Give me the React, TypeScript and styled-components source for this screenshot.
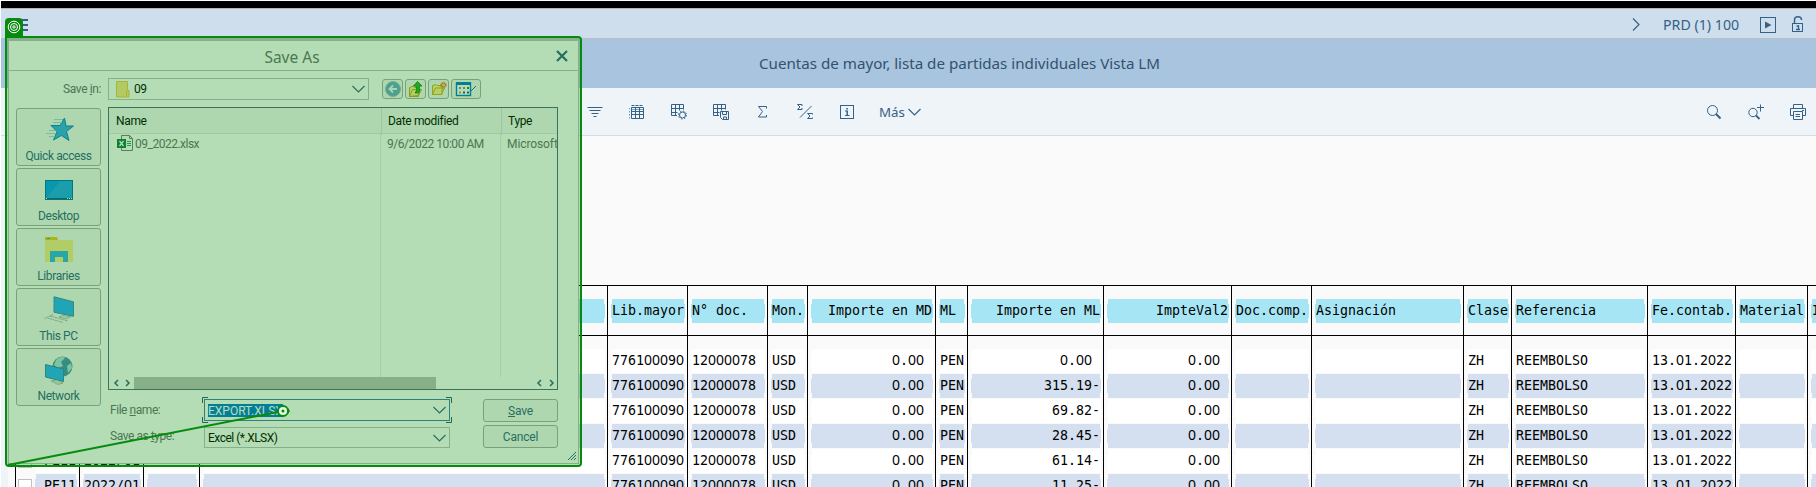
import React from "react";
import styled, { createGlobalStyle, css } from "styled-components";

const ink = "#346187";
const line = "#bfbfbf";
const uiFont = `Roboto, "Liberation Sans", sans-serif`;
const titleFont = `"Noto Sans", "Open Sans", sans-serif`;
const monoFont = `"DejaVu Sans Mono", "Liberation Mono", monospace`;

const GlobalStyle = createGlobalStyle`
  *, *::before, *::after { box-sizing: border-box; }
  body { margin: 0; background: #fff; font-family: ${uiFont}; }
`;

const Page = styled.div`
  position: relative;
  display: flex;
  flex-direction: column;
  width: 1816px;
  height: 487px;
  padding: 1px 0 0 1px;
  overflow: hidden;
  background: #fff;
`;

const TopEdge = styled.div`
  flex: none;
  height: 8px;
  background: #000;
  border-bottom: 1px solid #b9b7b4;
`;

const ShellBar = styled.header`
  flex: none;
  display: flex;
  align-items: center;
  justify-content: space-between;
  height: 30px;
  padding: 2px 12px 0 15px;
  background: #cfdeed;
  border-bottom: 1px solid #b9bfc6;
`;

const ShellRight = styled.div`
  display: flex;
  align-items: center;
`;

const SystemName = styled.span`
  width: 78px;
  margin: 0 19px 0 23px;
  font: 14.2px/20px ${titleFont};
  color: ${ink};
  white-space: nowrap;
`;

const LockIcon = styled.svg`
  margin-left: 16px;
`;

const TitleBar = styled.div`
  flex: none;
  height: 49px;
  padding: 0 0 0 102px;
  background: #a9c4de;
  color: #32526f;
  text-align: center;
  font: 15.15px/49px ${titleFont};
`;

const Toolbar = styled.div`
  flex: none;
  display: flex;
  align-items: center;
  height: 48px;
  padding-left: 576px;
  background: #eff4f8;
  border-bottom: 1px solid #cfdeeb;
`;

const ToolGroup = styled.div<{ $end?: boolean }>`
  display: flex;
  align-items: center;
  gap: 6px;
  margin-left: ${(p) => (p.$end ? "auto" : 0)};
`;

const ToolButton = styled.span`
  display: flex;
  justify-content: center;
  width: 36px;
`;

const MoreButton = styled.span`
  display: flex;
  align-items: center;
  gap: 3px;
  margin-left: 14px;
  color: ${ink};
  font: 13.3px/20px ${titleFont};
`;

const Content = styled.main`
  flex: none;
  width: 100%;
  height: 351px;
  padding: 149px 0 0 7px;
  background: linear-gradient(90deg, #eff4f8 7px, #fafafa 7px);
`;

const Columns = styled.div`
  display: flex;
  padding-left: 7px;
`;

const Column = styled.div<{ $width: number }>`
  flex: none;
  width: ${(p) => p.$width}px;
  height: 220px;
  border-left: 1px solid #000;
`;

const HeadBlock = styled.div`
  height: 51px;
  padding: 13px 2px 0 3px;
  margin-bottom: 13px;
  border: solid #000;
  border-width: 1px 0;
`;

const CellRow = styled.div`
  display: flex;
  height: 25px;
  padding: 0 2px 0 3px;
`;

const Cell = styled.div<{ $fill: string; $right?: boolean }>`
  flex: 1;
  height: 24px;
  padding: 0 1px;
  background:
    linear-gradient(${(p) => p.$fill}, ${(p) => p.$fill}) center / calc(100% - 2px) 100% no-repeat,
    linear-gradient(${(p) => p.$fill}, ${(p) => p.$fill}) center / 100% 14px no-repeat;
  color: #000;
  font: 13.29px/24px ${monoFont};
  text-align: ${(p) => (p.$right ? "right" : "left")};
  white-space: pre;
`;

const OpenZero = styled.span`
  font: 14px/1 ${titleFont};
`;

const Checkbox = styled.span`
  width: 14px;
  height: 14px;
  margin: 5px 3px 0 -1px;
  background: #fff;
  border: 1px solid #bfbfbf;
`;

/* Save dialog */

const Dialog = styled.section`
  position: absolute;
  left: 8px;
  top: 39px;
  width: 571px;
  height: 425px;
  background: #fff;
  border: 1px solid ${line};
  border-top-width: 2px;
  font-size: 12px;
  line-height: 14px;
  color: #6a6d70;
`;

const DialogTitle = styled.div`
  position: relative;
  height: 30px;
  padding-right: 3px;
  border-bottom: 1px solid ${line};
  text-align: center;
  font: 15.5px/32px ${titleFont};
  color: #6a6d70;
`;

const CloseIcon = styled.svg`
  position: absolute;
  right: 10px;
  top: 9px;
`;

const LookInRow = styled.div`
  display: flex;
  align-items: center;
  height: 22px;
  margin: 7px 0 7px 7px;
`;

const LookInLabel = styled.label`
  width: 85px;
  margin-right: 7px;
  text-align: right;
  letter-spacing: -0.4px;
`;

const Combo = styled.div<{ $w: number; $h: number; $focus?: boolean }>`
  position: relative;
  display: flex;
  align-items: center;
  width: ${(p) => p.$w}px;
  height: ${(p) => p.$h}px;
  padding: 0 3px 0 3px;
  background: #fff;
  border: 1px solid ${(p) => (p.$focus ? "#427cac" : line)};
  color: #000;
  letter-spacing: -0.5px;
  svg.arrow { margin-left: auto; }
`;

const ComboFolder = styled.svg`
  margin: 0 4px 0 4px;
`;

const FocusCorners = styled.svg`
  position: absolute;
  left: -3px;
  top: -3px;
`;

const Selected = styled.span`
  height: 13px;
  width: 75px;
  background: #0078d7;
  color: #fff;
  line-height: 14px;
  letter-spacing: 0;
  white-space: nowrap;
`;

const NavButtons = styled.div`
  display: flex;
  gap: 2px;
  margin-left: 13px;
`;

const NavButton = styled.span<{ $wide?: boolean }>`
  display: flex;
  align-items: center;
  justify-content: center;
  width: ${(p) => (p.$wide ? 30 : 21)}px;
  height: 20px;
  background: #f7f7f7;
  border: 1px solid #ababab;
  border-radius: 3px;
`;

const DialogMain = styled.div`
  display: flex;
  gap: 7px;
  padding-left: 7px;
`;

const Places = styled.nav`
  display: flex;
  flex-direction: column;
  gap: 2px;
  padding-top: 1px;
`;

const Place = styled.div`
  display: flex;
  flex-direction: column;
  align-items: center;
  justify-content: space-between;
  width: 85px;
  height: 58px;
  padding: 7px 0 2px;
  background: #f7f7f7;
  border: 1px solid #a9a9a9;
  border-radius: 3px;
  color: ${ink};
  letter-spacing: -0.4px;
`;

const FileList = styled.div`
  display: flex;
  flex-direction: column;
  width: 450px;
  height: 283px;
  border: 1px solid #4f6a78;
  overflow: hidden;
`;

const listGrid = css`
  display: grid;
  grid-template-columns: 272px 120px 57px;
`;

const ListHead = styled.div`
  ${listGrid}
  flex: none;
  height: 26px;
  background: #f7f7f7;
  border-bottom: 1px solid #e5e5e5;
  color: #000;
  line-height: 27px;
  letter-spacing: -0.35px;
  span { padding-left: 6px; }
  span:first-child { padding-left: 7px; }
  span + span { border-left: 1px solid #dedede; }
`;

const ListBody = styled.div`
  ${listGrid}
  flex: 1;
  line-height: 20px;
`;

const ListColumn = styled.div<{ $divided?: boolean; $spacing?: number }>`
  display: flex;
  margin-left: ${(p) => (p.$divided ? -1 : 0)}px;
  padding-left: ${(p) => (p.$divided ? 6 : 8)}px;
  border-left: ${(p) => (p.$divided ? "1px solid #e3efef" : "0")};
  letter-spacing: ${(p) => p.$spacing ?? 0}px;
  white-space: nowrap;
  svg { margin: 1px 2px 0 0; }
`;

const ScrollTrack = styled.div`
  flex: none;
  display: flex;
  align-items: center;
  height: 12px;
  padding-right: 1px;
`;

const ScrollThumb = styled.div`
  width: 302px;
  height: 12px;
  margin-right: auto;
  background: ${line};
`;

const Form = styled.div`
  display: flex;
  flex-direction: column;
  gap: 3px;
  margin-top: 9px;
`;

const FormRow = styled.div<{ $low?: boolean }>`
  display: flex;
  height: 23px;
  align-items: ${(p) => (p.$low ? "flex-end" : "flex-start")};
`;

const FieldLabel = styled.label`
  width: 96px;
  padding-left: 2px;
  line-height: 23px;
  letter-spacing: -0.45px;
`;

const PushButton = styled.button`
  width: 75px;
  height: 23px;
  margin: 0 0 0 33px;
  padding: 0;
  background: #f7f7f7;
  border: 1px solid #a9a9a9;
  border-radius: 3px;
  color: ${ink};
  font: 12px/20px ${uiFont};
  letter-spacing: -0.2px;
`;

const ResizeGrip = styled.svg`
  position: absolute;
  right: 2px;
  bottom: 3px;
`;

/* Recorder highlight drawn over the dialog */

const Highlight = styled.div`
  position: absolute;
  left: 5px;
  top: 36px;
  width: 577px;
  height: 431px;
  background: rgba(7, 141, 9, 0.3);
  background-clip: padding-box;
  border: 2px solid #078b0d;
  border-radius: 0 4px 4px 4px;
`;

const HighlightBadge = styled.div`
  position: absolute;
  left: 5px;
  top: 18px;
  display: flex;
  align-items: center;
  justify-content: center;
  width: 18px;
  height: 18px;
  background: #078b0d;
  border-radius: 4px 4px 0 0;
`;

const Pointer = styled.svg`
  position: absolute;
  left: 0;
  top: 400px;
`;

const Stroke = ({ w = 16, h = 16, d, sw = 1, c = ink, cls }: { w?: number; h?: number; d: string; sw?: number; c?: string; cls?: string }) => (
  <svg className={cls} width={w} height={h} viewBox={`0 0 ${w} ${h}`} fill="none" stroke={c} strokeWidth={sw}>
    <path d={d} />
  </svg>
);

const Chevron = () => <Stroke cls="arrow" w={13} h={8} sw={1.15} d="M.5 1 6.5 7 12.5 1" />;

const icons = {
  filter: <Stroke d="M.5 3.5h15M2.5 6.5h11M4.5 9.5h7M6.5 12.5h3" />,
  table: (
    <svg width="16" height="16" fill="none" stroke={ink}>
      <path d="M2.500 3.500h12v11h-12zM2.500 7.500h12M2.500 10.500h12M6.500 3.500v11M10.500 3.500v11" />
      <path d="M2.500 1.500h12" strokeDasharray="3 1" />
      <path d="M2.500 5.500h12" strokeWidth=".6" />
      <path d="M.500 4v11" strokeDasharray="1.500 1.500" stroke="#6aa5d8" />
    </svg>
  ),
  tableSettings: (
    <svg width="16" height="16" fill="none" stroke={ink}>
      <path d="M6 11.500H.500V.500h12v5M.500 4.500h12M.500 8.500h6M4.500.500v11M8.500.500v6" />
      <circle cx="11.500" cy="11" r="3" />
      <circle cx="11.500" cy="11" r="4" strokeDasharray="1.500 1.640" />
    </svg>
  ),
  tableSave: (
    <svg width="16" height="16" fill="none" stroke={ink}>
      <path d="M6 11.500H.500V.500h12v5M.500 4.500h12M.500 8.500h6M4.500.500v11M8.500.500v6" />
      <path d="M7.500 7.500h8v8h-6l-2-2zM9.500 7.500v3h4v-3M10.500 15.500v-2.500h3v2.500" />
    </svg>
  ),
  sum: <Stroke w={10} h={12} d="M8.500 2.500v-2h-8l4 5-4 5.500h8v-2" />,
  subtotal: <Stroke d="M5 2V.500H.500l2.500 2.500-2.500 2.500H5V4M14.500 2 3 13.500M15.500 10.500V9.500H10.500l2.500 2.500-2.500 2.500h5V13.500" />,
  info: (
    <svg width="14" height="14" fill="none" stroke={ink}>
      <rect x=".5" y=".5" width="13" height="13" />
      <path d="M5 6h2M5 10.500h4.500" />
      <path d="M6.300 3h1.600v1.500H6.300z" fill={ink} stroke="none" />
      <path d="M7.200 5.500v5" strokeWidth="1.500" />
    </svg>
  ),
  search: (
    <svg width="16" height="16" fill="none" stroke={ink}>
      <circle cx="6.500" cy="6.500" r="5" />
      <path d="m10 10 4.500 4.500" strokeWidth="2" />
    </svg>
  ),
  searchMore: (
    <svg width="16" height="16" fill="none" stroke={ink}>
      <circle cx="5" cy="8.500" r="4.200" />
      <path d="m8 11.500 3.500 3.500" strokeWidth="1.800" />
      <path d="M12.500.500v7M9 3.500h7" />
    </svg>
  ),
  print: (
    <svg width="16" height="16" fill="none" stroke={ink}>
      <path d="M3.500 4.500v-4h9v4M3.500 11.500H.500v-7h15v7h-3M12 6.500h2" />
      <path d="M3.500 7.500h9v8h-9zM5.500 10.500h4.500M5.500 12.500h4.500" />
    </svg>
  ),
};

const ExcelIcon = () => (
  <svg width="16" height="17" fill="none">
    <path d="M4.500.500h8l3 3v12h-11z" fill="#fff" stroke="#7a7a7a" />
    <path d="M12.500.500v3h3" stroke="#7a7a7a" />
    <path d="M10 6.500h4M10 8.500h4M10 10.500h4" stroke="#21a366" />
    <rect y="4" width="9" height="9" fill="#107c41" />
    <path d="m2.500 6 4 5M6.500 6l-4 5" stroke="#fff" strokeWidth="1.300" />
  </svg>
);

const Monitor = ({ d, edge }: { d: string; edge: string }) => (
  <path d={d} fill="#2aafff" stroke={edge} />
);

const placeIcons: Record<string, React.ReactNode> = {
  "Quick access": (
    <svg width="30" height="26" fill="none">
      <path d="m20.500 2 1.500 8h7.500l-7 5.500 2.500 9-7.500-5-8 4.500 3.500-8.500L7 9.500h9z" fill="#3aabee" stroke="#0f7fc4" />
      <path d="M10 3.500h9M9 6.500h9M2 17.500h9M5 20.500h6M5 14.500h6" stroke="#a9cfe4" />
    </svg>
  ),
  Desktop: (
    <svg width="28" height="28">
      <rect x=".5" y="4.500" width="27" height="19" fill="#0a9bf5" stroke="#0070a8" />
      <path d="M1 23 15 5h12v18z" fill="#3fb0f0" opacity=".5" />
      <path d="M1 22.500h26" stroke="#005a90" />
      <path d="M1 22.500h1M22 22.500h1M24 22.500h1M26 22.500h1" stroke="#fff" />
    </svg>
  ),
  Libraries: (
    <svg width="28" height="28">
      <path d="M0 2h12v2h16v22H0z" fill="#fee88f" />
      <path d="M0 1h12l1 3H0z" fill="#f3c41f" />
      <path d="M2 2h3v1H2z" fill="#20a5f0" />
      <path d="M5 15h18v11h-5v-5h-8v5H5z" fill="#37b2ec" />
    </svg>
  ),
  "This PC": (
    <svg width="32" height="28">
      <Monitor d="m11 .800 19.500 5v14.500l-19.500-4z" edge="#4d88a8" />
      <path d="m16 21 4-1.500 8 1-5 2.500z" fill="#e3e8ea" stroke="#8a9a9f" strokeWidth=".6" />
      <path d="M7 20 25 25M4.500 22 20 26.500M10 18.500 1.500 22.500" stroke="#a3aeb2" strokeDasharray="2 .6" />
    </svg>
  ),
  Network: (
    <svg width="30" height="29">
      <circle cx="18.500" cy="10.500" r="10" fill="#4b8fb8" />
      <path d="M12 4c4-4 8-3 9-2l-4 4 2 4-5 2-4-3zM23 10l4-3 1 5-4 5z" fill="#b4dbe2" />
      <Monitor d="m1.500 8.500 18 4.500v12.500l-18-4.500z" edge="#4580a5" />
      <path d="m7 25 6-1 6 3-5 1.500z" fill="#d8e0e2" stroke="#8a9a9f" strokeWidth=".6" />
    </svg>
  ),
};

const W = "#ffffff";
const B = "#d4dfef";
const H = "#a6e6f4";

type Col = { width: number; head: string; rows: string[]; right?: boolean; check?: boolean };
const six = (s: string) => Array(6).fill(s) as string[];

const columns: Col[] = [
  { width: 64, head: "", rows: six("PE11"), check: true },
  { width: 64, head: "", rows: six("2022/01") },
  { width: 56, head: "", rows: six("") },
  { width: 408, head: "", rows: six("") },
  { width: 80, head: "Lib.mayor", rows: six("776100090") },
  { width: 80, head: "N° doc.", rows: six("12000078") },
  { width: 40, head: "Mon.", rows: six("USD") },
  { width: 128, head: "Importe en MD", rows: six("0.00 "), right: true },
  { width: 32, head: "ML", rows: six("PEN") },
  { width: 136, head: "Importe en ML", rows: ["0.00 ", "315.19-", "69.82-", "28.45-", "61.14-", "11.25-"], right: true },
  { width: 128, head: "ImpteVal2", rows: six("0.00 "), right: true },
  { width: 80, head: "Doc.comp.", rows: six("") },
  { width: 152, head: "Asignación", rows: six("") },
  { width: 48, head: "Clase", rows: six("ZH") },
  { width: 136, head: "Referencia", rows: six("REEMBOLSO") },
  { width: 88, head: "Fe.contab.", rows: six("13.01.2022") },
  { width: 72, head: "Material", rows: six("") },
  { width: 80, head: "I", rows: six("") },
];

/* Zeros are set in the sans face so that they have no inner dot. */
const Figures = ({ text }: { text: string }) => (
  <>
    {text.split(/(0+)/).map((part, i) => (part.startsWith("0") ? <OpenZero key={i}>{part}</OpenZero> : part))}
  </>
);

const GridColumn = ({ col }: { col: Col }) => (
  <Column $width={col.width}>
    <HeadBlock>
      <Cell $fill={H} $right={col.right}>{col.head}</Cell>
    </HeadBlock>
    {col.rows.map((text, i) => (
      <CellRow key={i}>
        {col.check && <Checkbox />}
        <Cell $fill={i % 2 ? B : W} $right={col.right || col.check}>
          <Figures text={text} />
        </Cell>
      </CellRow>
    ))}
  </Column>
);

const SaveDialog = () => (
  <Dialog>
    <DialogTitle>
      Save As
      <CloseIcon width="12" height="12" stroke={ink} strokeWidth="2.200">
        <path d="m1 1 10 10M11 1 1 11" />
      </CloseIcon>
    </DialogTitle>
    <LookInRow>
      <LookInLabel>Save <u>i</u>n:</LookInLabel>
      <Combo $w={261} $h={22}>
        <ComboFolder width="14" height="17">
          <path d="M.500.500h11v9h1.500v6.500H.500z" fill="#fee28b" stroke="#efc540" />
          <path d="M10.500 15.500v-6" stroke="#efc540" />
        </ComboFolder>
        09
        <Chevron />
      </Combo>
      <NavButtons>
        <NavButton>
          <svg width="16" height="16">
            <circle cx="8" cy="8" r="7.500" fill="#6ba8cc" stroke="#a5bccb" />
            <path d="M12 8H4.500M8 4.500 4.500 8 8 11.500" fill="none" stroke="#eef5fa" strokeWidth="1.800" />
          </svg>
        </NavButton>
        <NavButton>
          <svg width="16" height="17">
            <path d="M1.500 15.500v-9l4-1.500 1 1.500h5l-1 9zM1.500 15.500l3-7h9l-3 6z" fill="#fff08c" stroke="#c9a227" />
            <path d="M10.500 12c1.500-2 1.500-4 .500-7H14L9.500.500 5.500 5h2.500c1 3 .500 5-1 7z" fill="#2cb52c" stroke="#0b7d12" strokeWidth=".8" />
          </svg>
        </NavButton>
        <NavButton>
          <svg width="16" height="16">
            <path d="M1.500 13.500v-9l3.500-1 1 1h5v9zM1.500 13.500l3-6.500h9l-3 6.500z" fill="#fff08c" stroke="#d2aa2c" />
            <circle cx="12.500" cy="4" r="2" fill="#ffd36a" stroke="#f0632a" />
            <circle cx="12.500" cy="4" r="3" fill="none" stroke="#f0632a" strokeDasharray="1 1.360" />
          </svg>
        </NavButton>
        <NavButton $wide>
          <svg width="26" height="16">
            <rect x="3.500" y="2" width="14" height="12.500" fill="#fff" stroke="#0078d7" strokeWidth="1.400" />
            <path d="M3 2.500h15" stroke="#0078d7" strokeWidth="3" />
            <path d="M6 7h2M10 7h2" stroke="#a08c80" strokeWidth="2" />
            <path d="M14 7h2" stroke="#159018" strokeWidth="2" />
            <path d="M6 11.500h2" stroke="#e08a50" strokeWidth="2" />
            <path d="M10 11.500h2M14 11.500h2" stroke="#1c4fa0" strokeWidth="2" />
            <path d="m18 10 5-5" stroke={ink} />
          </svg>
        </NavButton>
      </NavButtons>
    </LookInRow>
    <DialogMain>
      <Places>
        {Object.keys(placeIcons).map((name) => (
          <Place key={name}>
            {placeIcons[name]}
            {name}
          </Place>
        ))}
      </Places>
      <div>
        <FileList>
          <ListHead>
            <span>Name</span>
            <span>Date modified</span>
            <span>Type</span>
          </ListHead>
          <ListBody>
            <ListColumn $spacing={-0.5}><ExcelIcon />09_2022.xlsx</ListColumn>
            <ListColumn $divided $spacing={-0.45}>9/6/2022 10:00 AM</ListColumn>
            <ListColumn $divided $spacing={-0.1}>Microsoft</ListColumn>
          </ListBody>
          <ScrollTrack>
            <Stroke w={25} h={8} sw={1.5} d="M9 1 6 4 9 7M17 1 20 4 17 7" />
            <ScrollThumb />
            <Stroke w={20} h={8} sw={1.5} d="M5 1 2 4 5 7M14 1 17 4 14 7" />
          </ScrollTrack>
        </FileList>
        <Form>
          <FormRow>
            <FieldLabel>File <u>n</u>ame:</FieldLabel>
            <Combo $w={246} $h={22} $focus>
              <Selected>EXPORT.XLSX</Selected>
              <Chevron />
              <FocusCorners width="250" height="26" fill="none" stroke="#2c5870">
                <path d="M.500 6V.500H6M244 .500h5.500V6M.500 20v5.500H6M244 25.500h5.500V20" />
              </FocusCorners>
            </Combo>
            <PushButton><u>S</u>ave</PushButton>
          </FormRow>
          <FormRow $low>
            <FieldLabel>Save as <u>t</u>ype:</FieldLabel>
            <Combo $w={246} $h={21}>
              Excel (*.XLSX)
              <Chevron />
            </Combo>
            <PushButton>Cancel</PushButton>
          </FormRow>
        </Form>
      </div>
    </DialogMain>
    <ResizeGrip width="8" height="8" stroke={ink}>
      <path d="M0 8 8 0M3 8l5-5M6 8l2-2" />
    </ResizeGrip>
  </Dialog>
);

export default function App() {
  return (
    <Page>
      <GlobalStyle />
      <TopEdge />
      <ShellBar>
        <Stroke w={12} h={13} sw={2} d="M0 2h12M0 7h12M0 12h12" />
        <ShellRight>
          <Stroke w={8} h={13} sw={1.2} d="M1 .500 7 6.500 1 12.500" />
          <SystemName>PRD (1) 100</SystemName>
          <svg width="16" height="16" fill="none" stroke={ink}>
            <rect x=".5" y=".5" width="15" height="15" />
            <path d="m5 4.500 6.500 3.500L5 11.500z" fill={ink} stroke="none" />
          </svg>
          <LockIcon width="12" height="17" fill="none" stroke={ink}>
            <path d="M2.500 8V4C2.500-.3 9.500-.3 9.500 4" strokeWidth="1.500" />
            <rect x=".5" y="7.500" width="10" height="8" />
            <path d="M4.500 10h2v3.500M4 13.500h4" strokeWidth="1.300" />
          </LockIcon>
        </ShellRight>
      </ShellBar>
      <TitleBar>Cuentas de mayor, lista de partidas individuales Vista LM</TitleBar>
      <Toolbar>
        <ToolGroup>
          {[icons.filter, icons.table, icons.tableSettings, icons.tableSave, icons.sum, icons.subtotal, icons.info].map((icon, i) => (
            <ToolButton key={i}>{icon}</ToolButton>
          ))}
        </ToolGroup>
        <MoreButton>
          Más
          <Chevron />
        </MoreButton>
        <ToolGroup $end>
          {[icons.search, icons.searchMore, icons.print].map((icon, i) => (
            <ToolButton key={i}>{icon}</ToolButton>
          ))}
        </ToolGroup>
      </Toolbar>
      <Content>
        <Columns>
          {columns.map((col, i) => (
            <GridColumn key={i} col={col} />
          ))}
        </Columns>
      </Content>
      <SaveDialog />
      <Highlight />
      <HighlightBadge>
        <svg width="14" height="14" fill="none" stroke="#fff">
          <circle cx="7" cy="7" r="5.800" />
          <circle cx="7" cy="7" r="3.500" />
          <circle cx="7" cy="7" r="1.200" />
        </svg>
      </HighlightBadge>
      <Pointer width="300" height="70" fill="none" stroke="#078b0d">
        <path d="M8 65 278 12" strokeWidth="2" />
        <circle cx="283" cy="11" r="5" fill="#e6f5e6" strokeWidth="1.800" />
        <circle cx="283" cy="11" r="1.500" fill="#078b0d" stroke="none" />
        <path d="m288 8 2 3-2 3z" fill="#078b0d" stroke="none" />
      </Pointer>
    </Page>
  );
}
